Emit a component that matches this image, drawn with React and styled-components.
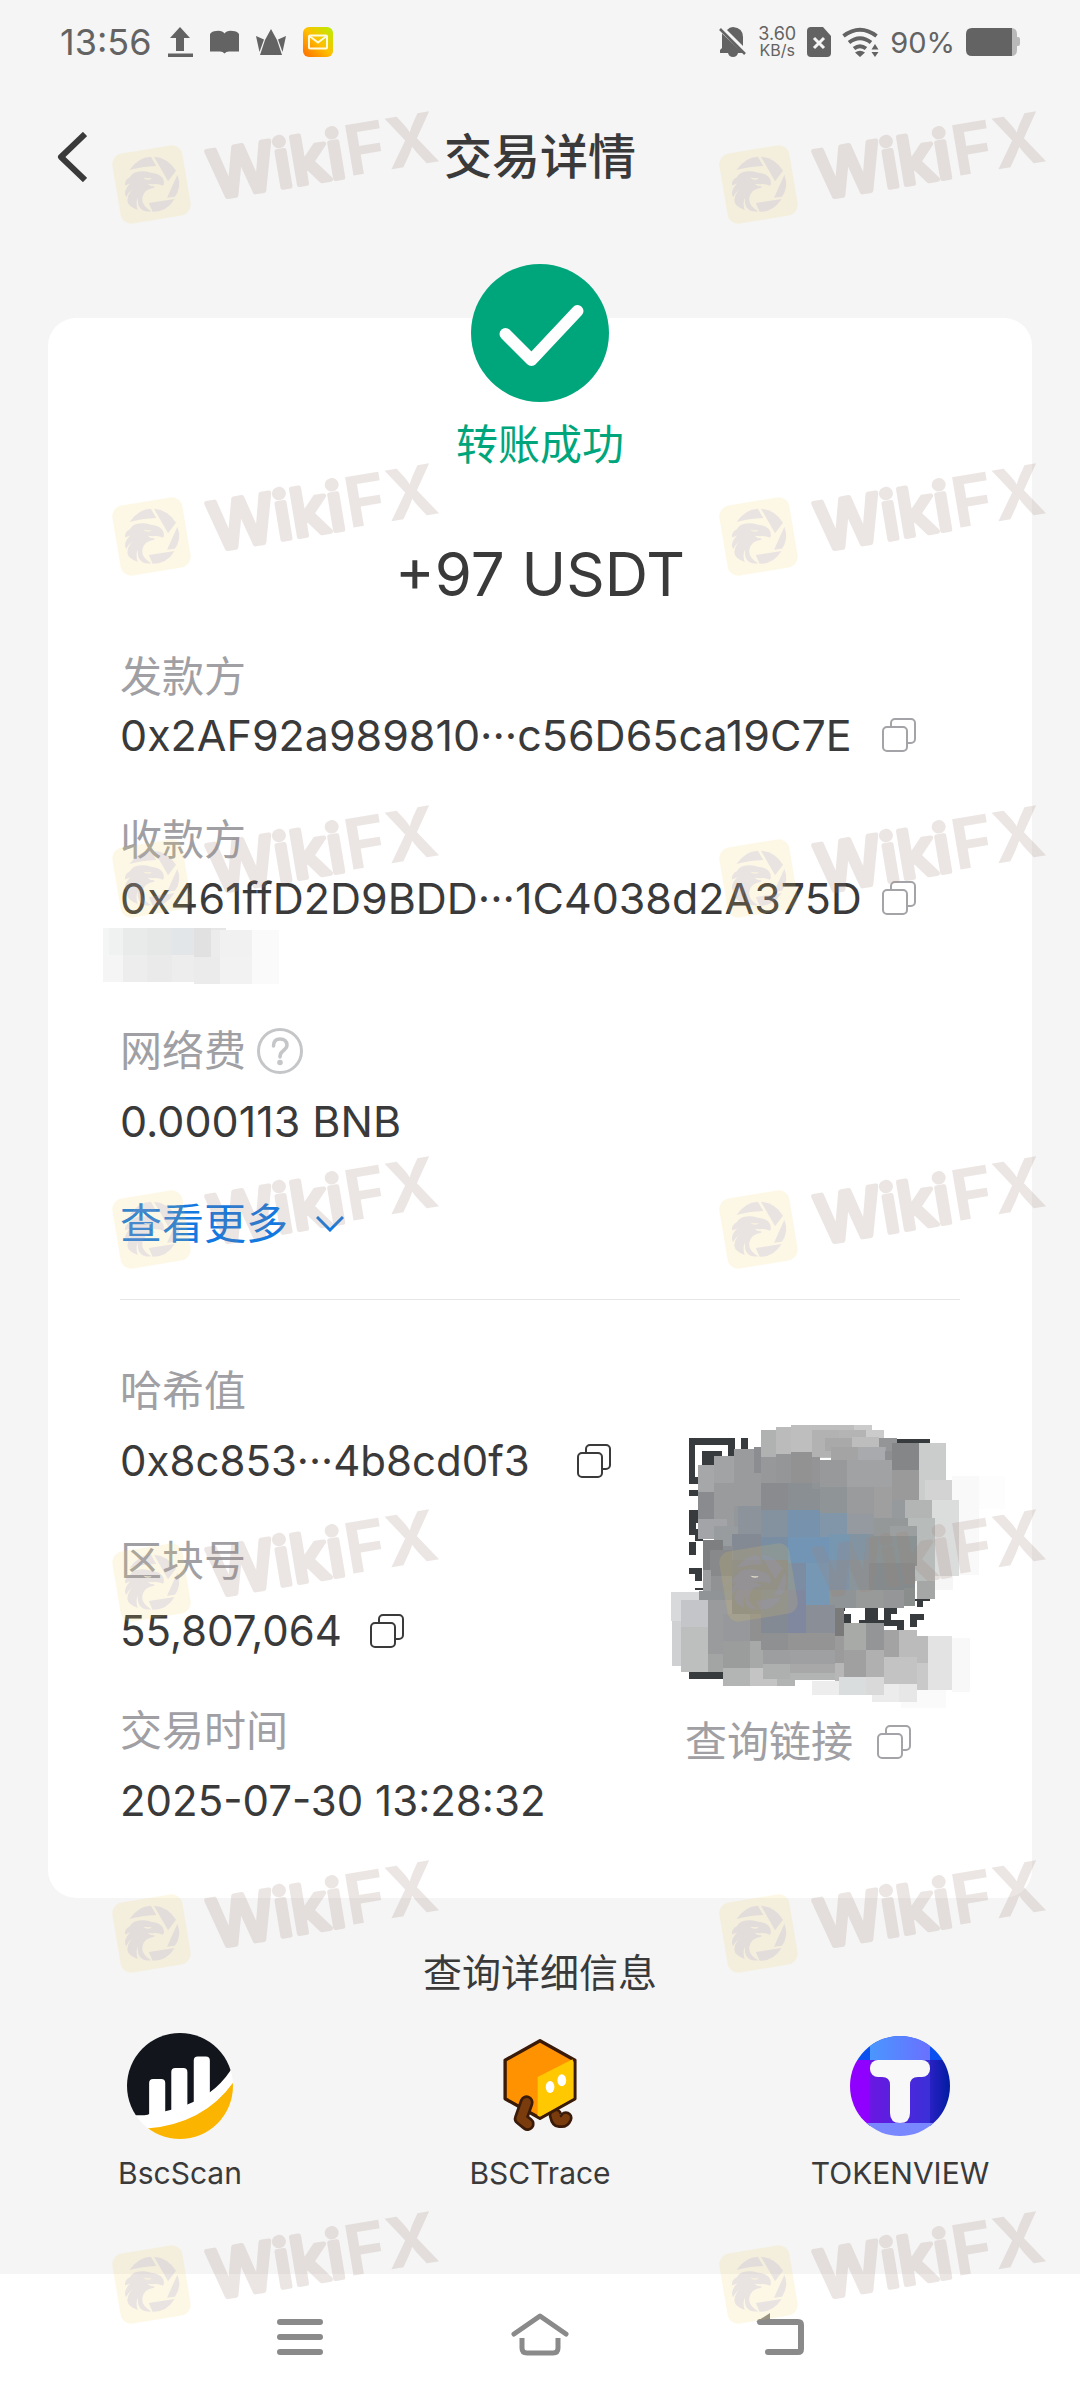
import React from "react";
import styled, { createGlobalStyle } from "styled-components";

const GlobalStyle = createGlobalStyle`
  * {
    box-sizing: border-box;
  }
  body {
    margin: 0;
    background: #f5f5f5;
    color: #3a3a3b;
    font-family: Inter, "Noto Sans CJK SC", sans-serif;
  }
  button {
    padding: 0;
    border: none;
    background: none;
    color: inherit;
    font: inherit;
    cursor: pointer;
  }
  svg {
    display: block;
    flex: none;
  }
  h1, h2, p, dl, dt, dd {
    margin: 0;
    font-weight: 400;
  }
`;

const Page = styled.div`
  position: relative;
  display: flex;
  flex-direction: column;
  min-height: 100vh;
  overflow: hidden;
`;

const StatusBar = styled.div`
  display: flex;
  justify-content: space-between;
  height: 84px;
  padding: 0 60px;
  color: #636363;
`;

const StatusGroup = styled.div`
  display: flex;
  align-items: center;
  gap: ${({ $gap }) => $gap}px;
`;

const Clock = styled.span`
  font-size: 36px;
`;

const Speed = styled.span`
  display: flex;
  flex-direction: column;
  align-items: center;
  font-size: 18px;
  line-height: 16px;
`;

const SpeedUnit = styled.span`
  font-size: 16px;
`;

const Percent = styled.span`
  font-size: 29px;
`;

const Header = styled.header`
  display: grid;
  grid-template-columns: 1fr auto 1fr;
  align-items: center;
  height: 146px;
  padding: 0 57px;
`;

const BackButton = styled.button`
  justify-self: start;
`;

const Title = styled.h1`
  font-size: 48px;
  font-weight: 500;
  line-height: 60px;
`;

const Card = styled.main`
  margin: 88px 48px 0;
  padding: 0 72px 68px;
  border-radius: 28px;
  background: #fff;
`;

const Summary = styled.section`
  display: flex;
  flex-direction: column;
  align-items: center;
  margin-top: -54px;
`;

const Result = styled.p`
  margin-top: 13px;
  color: #00a67b;
  font-size: 42px;
  line-height: 60px;
`;

const Amount = styled.p`
  margin: 59px 0 34px;
  font-size: 60px;
  line-height: 80px;
`;

const Fields = styled.dl`
  display: flex;
  flex-direction: column;
  gap: ${({ $gap }) => $gap}px;
`;

const Field = styled.div`
  display: flex;
  flex-direction: column;
  gap: ${({ $gap }) => $gap || 0}px;
`;

const Label = styled.dt`
  display: flex;
  align-items: center;
  gap: 11px;
  color: #a0a0a4;
  font-size: 42px;
  line-height: 58px;
`;

const Value = styled.dd`
  display: flex;
  align-items: center;
  justify-content: ${({ $spread }) => ($spread ? "space-between" : "start")};
  gap: ${({ $spread }) => ($spread ? 16 : 28)}px;
  padding-right: ${({ $inset }) => $inset || 0}px;
  font-size: ${({ $small }) => ($small ? 42 : 43)}px;
  line-height: 58px;
  white-space: nowrap;
`;

const IconButton = styled.button`
  color: ${({ $muted }) => ($muted ? "#a4a4a8" : "#3a3a3b")};
`;

const Masked = styled.div`
  height: 94px;
  margin-top: 1px;
  margin-left: -17px;
`;

const MoreButton = styled.button`
  display: flex;
  align-items: center;
  gap: 28px;
  margin: 45px 0 46px;
  color: #1378e0;
  font-size: 42px;
  line-height: 58px;
`;

const Chain = styled.section`
  display: grid;
  grid-template-columns: 1fr 275px;
  gap: 74px;
  padding-top: 62px;
  border-top: 1px solid #e6e6e6;
`;

const QrColumn = styled.div`
  padding-top: 76px;
`;

const QrImage = styled.svg`
  margin-left: 4px;
  overflow: visible;
`;

const LinkRow = styled.div`
  display: flex;
  align-items: center;
  gap: 24px;
  margin-top: 34px;
  color: #a0a0a4;
  font-size: 42px;
  line-height: 58px;
`;

const Explorers = styled.section`
  padding-top: 50px;
`;

const ExplorersTitle = styled.h2`
  font-size: 39px;
  line-height: 50px;
  text-align: center;
`;

const ExplorerList = styled.nav`
  display: grid;
  grid-template-columns: repeat(3, 1fr);
  margin-top: 35px;
`;

const Explorer = styled.a`
  display: flex;
  flex-direction: column;
  align-items: center;
  gap: 14px;
  color: inherit;
  font-size: 30px;
  line-height: 40px;
  text-decoration: none;
`;

const SystemNav = styled.nav`
  display: flex;
  align-items: center;
  justify-content: center;
  gap: 180px;
  height: 126px;
  margin-top: auto;
  padding-bottom: 6px;
  background: #fff;
  color: #8a8a8a;
`;

const Overlay = styled.div`
  position: absolute;
  inset: 0;
  pointer-events: none;
`;

const Mark = styled.svg`
  position: absolute;
  top: ${({ $top }) => $top}px;
  left: ${({ $left }) => $left}px;
  overflow: visible;
`;

const CopyIcon = () => (
  <svg width="34" height="34" fill="none" stroke="currentColor" strokeWidth="2">
    <rect x="1" y="9" width="24" height="24" rx="4" />
    <path d="M9 9V5a4 4 0 0 1 4-4h16a4 4 0 0 1 4 4v16a4 4 0 0 1-4 4h-4" />
  </svg>
);

const CopyButton = ({ label, muted }) => (
  <IconButton type="button" aria-label={label} $muted={muted}>
    <CopyIcon />
  </IconButton>
);

const UploadIcon = () => (
  <svg width="25" height="30" fill="currentColor">
    <path d="M12 0 22 11h-6v13H8V11H2zM0 26.500h25V30H0z" />
  </svg>
);

const BookIcon = () => (
  <svg width="29" height="24" fill="currentColor">
    <path d="M0 4Q2 1 6 1q6-1 8.500 2.500Q17 0 23 1q4 0 6 3v17.500H19q-3 0-4.500 2-1.500-2-4.500-2H0z" />
  </svg>
);

const CrownIcon = () => (
  <svg width="30" height="26" fill="currentColor">
    <path d="M15 0 21 11 26 26H4L9 11zM0 7l8 3.500L3.500 23zM30 7l-8 3.500L26.500 23z" />
  </svg>
);

const MailIcon = () => (
  <svg width="30" height="30">
    <defs>
      <linearGradient id="mail" x1="0" y1="1" x2="1" y2="0">
        <stop offset="0" stopColor="#ff6a00" />
        <stop offset=".5" stopColor="#ffbf00" />
        <stop offset="1" stopColor="#b6f000" />
      </linearGradient>
    </defs>
    <rect width="30" height="30" rx="6" fill="url(#mail)" />
    <g fill="none" stroke="#fffbe0" strokeWidth="2">
      <rect x="6" y="8.500" width="18" height="13" rx="1" />
      <path d="m7 9.500 8 6 8-6" />
    </g>
  </svg>
);

const MuteIcon = () => (
  <svg width="28" height="30" fill="currentColor">
    <path d="M3 6.500 24 26h-5q-1 4-5 4t-5-4H1v-3l2-2zM8 3q2.500-3 6-3 10 1 10 10v9z" />
    <path d="m1 2 25 25" stroke="currentColor" strokeWidth="2.500" />
  </svg>
);

const SimIcon = () => (
  <svg width="24" height="30">
    <path d="M4 0h12l8 9v17q0 4-4 4H4q-4 0-4-4V4q0-4 4-4z" fill="currentColor" />
    <path d="m7 11 10 10m0-10L7 21" stroke="#f5f5f5" strokeWidth="3" />
  </svg>
);

const WifiIcon = () => (
  <svg width="37" height="30" fill="none" stroke="currentColor" strokeWidth="4">
    <path d="M1.500 9q16.500-12.500 33 0M7 15.500q11-8.500 22 0M12 21.500q6-4.500 12 0" />
    <path d="M18 30l-5-4.500q5-3.500 10 0zM29.500 22.500h7L33 17zM29.500 25h7L33 30z" fill="currentColor" stroke="none" />
  </svg>
);

const BatteryIcon = () => (
  <svg width="54" height="28">
    <path d="M45 0q6 0 6 6v3h1q2 0 2 2v5q0 2-2 2h-1v4q0 6-6 6z" fill="#b9b9b9" />
    <path d="M6 0h40v28H6q-6 0-6-6V6q0-6 6-6z" fill="currentColor" />
  </svg>
);

const ChevronLeft = () => (
  <svg width="30" height="50" fill="none" stroke="#3a3a3b" strokeWidth="6">
    <path d="m28 2-24 23 24 23" strokeLinejoin="round" />
  </svg>
);

const SuccessIcon = () => (
  <svg width="138" height="138">
    <circle cx="69" cy="69" r="69" fill="#00a67b" />
    <path
      d="m34.500 70 26 26 46-49"
      fill="none"
      stroke="#fff"
      strokeWidth="12"
      strokeLinecap="round"
      strokeLinejoin="round"
    />
  </svg>
);

const HelpIcon = () => (
  <svg width="46" height="46" fill="none" stroke="#c4c6c8" strokeWidth="3">
    <circle cx="23" cy="23" r="21.500" />
    <path d="M16.500 18q0-7 6.500-7t7 6q0 3-4 6-3 2-3 6" strokeWidth="3.500" strokeLinecap="round" />
    <circle cx="23" cy="34.500" r="2.800" fill="#c4c6c8" stroke="none" />
  </svg>
);

const ChevronDown = () => (
  <svg width="28" height="16" fill="none" stroke="currentColor" strokeWidth="3">
    <path d="m1 1 13 13L27 1" />
  </svg>
);

const BscScanLogo = () => (
  <svg width="106" height="106" viewBox="141 101 316 316">
    <clipPath id="bsc">
      <circle cx="299" cy="259" r="158" />
    </clipPath>
    <g clipPath="url(#bsc)">
      <path d="M141 101h316v316H141z" fill="#fff" />
      <path
        d="M141 101h316v100l-9 14q-24 36-60 63l-48 28-19 8-48 16-18 4-45 7q-8 7-24 5h-45z"
        fill="#12161c"
      />
      <path d="M207 360V250q0-12 12-12h24q12 0 12 12v110zM273 350V217q0-12 12-12h24q12 0 12 12v123zM340 330V183q0-12 12-12h24q12 0 12 12v127z" fill="#fff" />
      <path d="M200 386q170-15 257-137v168H200z" fill="#fbb500" />
    </g>
  </svg>
);

const BscTraceLogo = () => (
  <svg width="106" height="106" viewBox="1220 101 316 316" strokeLinejoin="round" strokeLinecap="round">
    <path d="M1424 346q4 20 14 18 12 2 17-10" fill="none" stroke="#3a1a08" strokeWidth="40" />
    <path d="M1424 346q4 20 14 18 12 2 17-10" fill="none" stroke="#7a3c0c" strokeWidth="24" />
    <path d="m1378 124 104 58v115l-104 58-104-58V182z" fill="#ff9200" stroke="#3a1a08" strokeWidth="10" />
    <path d="m1371 232 104-53 3 10v106l-100 56-7-3z" fill="#ffc800" />
    <ellipse cx="1408" cy="262" rx="13" ry="18" fill="#fff" />
    <ellipse cx="1443" cy="242" rx="13" ry="18" fill="#fff" />
    <path d="m1338 308-17 48 20 16" fill="none" stroke="#3a1a08" strokeWidth="42" />
    <path d="m1338 308-17 48 20 16" fill="none" stroke="#7a3c0c" strokeWidth="26" />
  </svg>
);

const TokenViewLogo = () => (
  <svg width="106" height="106" viewBox="-3 -3 106 106">
    <defs>
      <linearGradient id="tvTop">
        <stop offset="0" stopColor="#4a96ff" />
        <stop offset="1" stopColor="#6a70ff" />
      </linearGradient>
      <linearGradient id="tvMid">
        <stop offset="0" stopColor="#6a18e2" />
        <stop offset="1" stopColor="#3a30d8" />
      </linearGradient>
      <linearGradient id="tvRight">
        <stop offset="0" stopColor="#2a20c4" />
        <stop offset="1" stopColor="#001ca0" />
      </linearGradient>
      <clipPath id="tv">
        <circle cx="50" cy="50" r="50" />
      </clipPath>
    </defs>
    <g clipPath="url(#tv)">
      <path d="M0 0h100v24H0z" fill="#0a50f0" />
      <path d="M0 24h20v76H0z" fill="#9000ff" />
      <path d="M20 0h60v30H20z" fill="url(#tvTop)" />
      <path d="M20 24h60v63H20z" fill="url(#tvMid)" />
      <path d="M80 24h20v76H80z" fill="url(#tvRight)" />
      <path d="M0 87h100v13H0z" fill="#7a88ff" />
      <rect x="20" y="24" width="60" height="17" rx="8" fill="#f8f8f8" />
      <path d="M32 41q8 0 8 8v28q0 10 10 10t10-10V49q0-8 8-8z" fill="#f8f8f8" />
    </g>
  </svg>
);

// [x, y, width, height, fill]
const Blocks = ({ items }) =>
  items.map(([x, y, width, height, fill], index) => (
    <rect key={index} x={x} y={y} width={width} height={height} fill={fill} />
  ));

const nameBlocks = [
  [69, 864, 18, 81, "#f4f5f5"], [87, 864, 42, 81, "#f0f1f1"], [129, 864, 72, 81, "#e9eaea"],
  [201, 864, 75, 81, "#e6e7e7"], [276, 864, 66, 81, "#e3e6e8"], [342, 864, 51, 87, "#e1e1e1"],
  [393, 864, 45, 6, "#e6e6e6"], [393, 870, 27, 81, "#ececec"], [420, 870, 97, 81, "#f1f1f1"],
  [516, 870, 81, 162, "#fafafa"], [69, 945, 60, 81, "#f5f5f5"], [129, 945, 72, 81, "#ededed"],
  [201, 945, 75, 81, "#eaeaea"], [276, 945, 66, 81, "#ededed"], [342, 951, 78, 81, "#ebebeb"],
  [420, 951, 96, 81, "#f2f2f2"],
];

const ink = "#383b3d";

const qrBlocks = [
  [88, 115, 137, 137, ink], [107, 135, 99, 98, "#fff"], [127, 154, 59, 60, ink],
  [245, 115, 19, 35, ink], [88, 272, 27, 18, ink], [88, 330, 27, 77, ink],
  [108, 370, 7, 18, "#fff"], [107, 404, 22, 21, ink], [88, 427, 20, 38, ink],
  [88, 506, 39, 18, ink], [107, 524, 20, 19, ink], [107, 564, 22, 8, ink],
  [88, 818, 102, 19, ink], [711, 117, 99, 14, ink], [527, 622, 28, 12, ink],
  [553, 642, 22, 27, ink], [615, 622, 39, 42, ink], [597, 662, 135, 18, ink],
  [673, 622, 40, 42, ink], [693, 643, 20, 19, "#fff"], [713, 680, 19, 10, ink],
  [765, 597, 45, 6, ink], [771, 600, 19, 22, ink], [752, 642, 40, 19, ink],
  [752, 661, 20, 20, ink],
];

const mosaicBlocks = [
  [876, 228, 81, 297, "#f9f9f9"], [957, 228, 78, 100, "#fdfdfd"], [825, 528, 54, 42, "#f6f6f6"],
  [303, 91, 45, 85, "#afb2b1"], [348, 81, 45, 90, "#bbb"], [393, 75, 225, 100, "#bebebe"],
  [582, 75, 54, 20, "#cbcbcb"], [618, 90, 54, 25, "#cbcbcb"], [537, 90, 81, 40, "#b4b4b4"],
  [456, 90, 81, 81, "#b2b2b2"], [495, 115, 81, 40, "#a9a9a9"], [576, 113, 82, 30, "#bdbdbd"],
  [222, 180, 528, 400, "#8c9298"],
  [658, 114, 53, 40, "#949596"], [513, 141, 165, 40, "#a4a4a5"], [594, 141, 81, 39, "#a9aaae"],
  [675, 154, 21, 40, "#8e8f90"], [222, 147, 81, 180, "#9a9b9d"], [282, 141, 21, 80, "#8c8d90"],
  [162, 168, 60, 81, "#a2a3a5"], [162, 249, 60, 135, "#999b9d"], [114, 195, 48, 81, "#a6a7a9"],
  [114, 276, 48, 81, "#8a8b8e"], [114, 357, 87, 60, "#a3a4a7"], [303, 171, 45, 80, "#97989a"],
  [348, 162, 45, 88, "#959697"], [393, 156, 63, 95, "#929292"], [456, 171, 24, 80, "#949496"],
  [480, 180, 81, 81, "#98999b"], [561, 180, 135, 81, "#a1a2a4"], [696, 129, 81, 81, "#858688"],
  [696, 210, 81, 90, "#9a9a9a"], [777, 129, 81, 171, "#cbcdcc"], [795, 240, 81, 60, "#d3d3d3"],
  [735, 300, 81, 54, "#b2b5b4"], [816, 300, 81, 228, "#dbdddd"], [303, 249, 81, 81, "#8a8b8f"],
  [384, 249, 96, 81, "#8a8f93"], [456, 249, 24, 20, "#8f9395"], [480, 261, 81, 81, "#8f9496"],
  [561, 261, 81, 81, "#9a9b9d"], [642, 261, 54, 93, "#9f9f9f"], [696, 300, 39, 60, "#979a9c"],
  [162, 380, 87, 70, "#999c9f"], [222, 320, 12, 62, "#95989b"], [234, 320, 69, 90, "#8c939a"],
  [303, 330, 81, 81, "#84919e"], [384, 330, 96, 81, "#7792ac"], [480, 340, 81, 72, "#8196a8"],
  [561, 342, 81, 60, "#9599a0"], [642, 354, 102, 54, "#959899"], [744, 354, 81, 190, "#b7bbba"],
  [690, 380, 81, 30, "#9b9f9f"], [216, 402, 87, 80, "#848a94"], [303, 411, 81, 80, "#7a8ea3"],
  [384, 411, 123, 126, "#7395b5"], [507, 402, 61, 80, "#7796b0"], [568, 402, 60, 80, "#8294a2"],
  [628, 408, 143, 90, "#8a9293"], [129, 422, 60, 90, "#7e7f81"], [189, 438, 30, 100, "#8b8f94"],
  [152, 450, 64, 81, "#88898b"], [129, 510, 24, 66, "#9e9fa1"], [153, 530, 63, 46, "#919294"],
  [216, 482, 168, 90, "#83878f"], [384, 490, 55, 90, "#7c8da3"], [439, 490, 70, 125, "#7698b5"],
  [508, 482, 60, 90, "#7f93a5"], [568, 482, 60, 90, "#89949b"], [628, 490, 137, 80, "#858b8d"],
  [508, 570, 80, 54, "#8f9496"], [588, 570, 81, 54, "#989a9a"], [669, 570, 65, 54, "#949697"],
  [734, 564, 31, 54, "#8a8f8e"], [771, 543, 54, 54, "#a5a6a6"], [33, 576, 84, 87, "#d8d9da"],
  [36, 663, 81, 135, "#cfd0d1"], [117, 575, 100, 70, "#909497"], [63, 600, 81, 81, "#c4c5c8"],
  [63, 681, 81, 135, "#bdbfbf"], [144, 600, 72, 162, "#9a9b9d"], [144, 762, 45, 54, "#a2a5a4"],
  [216, 572, 87, 70, "#87898a"], [189, 642, 81, 81, "#96989b"], [189, 723, 81, 81, "#9b9d9d"],
  [189, 804, 81, 54, "#b3b4b4"], [270, 642, 33, 81, "#909090"], [270, 723, 40, 81, "#a7a9a8"],
  [270, 804, 81, 54, "#c4c4c4"], [351, 835, 54, 23, "#b2b4b3"], [303, 570, 81, 129, "#848a94"],
  [384, 570, 55, 129, "#8088a0"], [439, 615, 86, 84, "#8a8e97"], [303, 699, 81, 51, "#8f9092"],
  [384, 699, 141, 51, "#949495"], [525, 624, 28, 84, "#7a7a7a"], [525, 708, 28, 81, "#9b9b9b"],
  [525, 789, 28, 54, "#b7b7b7"], [309, 750, 81, 42, "#9d9ea0"], [390, 750, 135, 42, "#9fa0a1"],
  [309, 792, 81, 45, "#aeb0af"], [390, 792, 135, 30, "#a8a8a9"], [390, 820, 135, 22, "#b1b4b2"],
  [552, 669, 66, 81, "#a7aaa7"], [618, 669, 54, 81, "#939597"], [552, 750, 66, 81, "#a0a0a0"],
  [618, 750, 54, 81, "#b0b0b0"], [672, 690, 45, 81, "#a3a3a3"], [717, 690, 54, 81, "#bbb"],
  [771, 708, 33, 81, "#bbb"], [672, 771, 99, 81, "#c3c3c3"], [771, 789, 33, 81, "#c9c9c9"],
  [804, 708, 72, 162, "#e3e3e3"], [876, 714, 54, 162, "#f8f8f8"], [456, 843, 81, 42, "#ededed"],
  [537, 831, 81, 54, "#dadddd"], [618, 831, 54, 54, "#d9d9d9"], [636, 885, 81, 21, "#ececec"],
  [672, 852, 45, 54, "#ececec"], [717, 852, 54, 54, "#e7e7e7"], [723, 906, 135, 18, "#fafafa"],
  [771, 870, 87, 54, "#fafafa"],
];

const Watermark = ({ top, left }) => (
  <Mark width="340" height="130" $top={top} $left={left}>
    <rect
      x="11"
      y="44"
      width="71"
      height="71"
      rx="11"
      fill="rgba(240, 205, 85, 0.15)"
      transform="rotate(-9.500 46.500 79.500)"
    />
    <g transform="translate(-105 -105) scale(.3444 .3333)" fill="rgba(155, 148, 210, 0.2)">
      <path d="M376 510q24-38 62-40l16 28q-42 1-78 12z" />
      <path d="M447 470q42 4 64 42l-23 32z" />
      <path d="M515 524q14 36-7 66l-23 3z" />
      <path d="M432 609l75-12q-24 40-64 38z" />
      <path d="M363 556q-2-16 14-24 8-18 34-18 14-2 28 4 38 4 37 34l-3 5q-14-7-30-4l-15-2q8 8 20 8v4q-32 4-35 32-2 22 26 39-24 4-34-12-6-10-5-30-7 18 0 38-28-10-30-26-2-18 16-38-14 12-20 26-10-18 12-42-12 6-15 6z" />
      <path d="M416 533q8 9 22 5l2-3q-10 0-24-2z" fill="rgba(255, 248, 220, 0.7)" />
    </g>
    <g
      transform="translate(108 94) rotate(-9.500)"
      fill="#a08278"
      stroke="#a08278"
      strokeWidth="5"
      strokeLinejoin="round"
      opacity=".2"
      fontFamily="Inter, sans-serif"
      fontSize="66"
    >
      <text fontWeight="500">Wiki</text>
      <text x="138" fontSize="70" fontWeight="700" strokeWidth="0">
        FX
      </text>
    </g>
  </Mark>
);

const markRows = [105, 457, 799, 1150, 1503, 1854, 2205];
const markColumns = [105, 712];

export default () => (
  <Page>
    <GlobalStyle />
    <StatusBar>
      <StatusGroup $gap={17}>
        <Clock>13:56</Clock>
        <UploadIcon />
        <BookIcon />
        <CrownIcon />
        <MailIcon />
      </StatusGroup>
      <StatusGroup $gap={11}>
        <MuteIcon />
        <Speed>
          3.60
          <SpeedUnit>KB/s</SpeedUnit>
        </Speed>
        <SimIcon />
        <WifiIcon />
        <Percent>90%</Percent>
        <BatteryIcon />
      </StatusGroup>
    </StatusBar>

    <Header>
      <BackButton type="button" aria-label="返回">
        <ChevronLeft />
      </BackButton>
      <Title>交易详情</Title>
    </Header>

    <Card>
      <Summary>
        <SuccessIcon />
        <Result>转账成功</Result>
        <Amount>+97 USDT</Amount>
      </Summary>

      <Fields $gap={47}>
        <Field>
          <Label>发款方</Label>
          <Value $spread $inset={44}>
            0x2AF92a989810···c56D65ca19C7E
            <CopyButton label="复制发款方" muted />
          </Value>
        </Field>
        <Field>
          <Label>收款方</Label>
          <Value $spread $inset={44}>
            0x461ffD2D9BDD···1C4038d2A375D
            <CopyButton label="复制收款方" muted />
          </Value>
        </Field>
      </Fields>
      <Masked>
        <svg width="176" height="56" viewBox="69 864 528 168" shapeRendering="crispEdges">
          <Blocks items={nameBlocks} />
        </svg>
      </Masked>
      <Fields>
        <Field $gap={12}>
          <Label>
            网络费
            <IconButton type="button" aria-label="网络费说明">
              <HelpIcon />
            </IconButton>
          </Label>
          <Value>0.000113 BNB</Value>
        </Field>
      </Fields>
      <MoreButton type="button">
        查看更多
        <ChevronDown />
      </MoreButton>

      <Chain>
        <Fields $gap={42}>
          <Field $gap={12}>
            <Label>哈希值</Label>
            <Value $small $spread>
              0x8c853···4b8cd0f3
              <CopyButton label="复制哈希值" />
            </Value>
          </Field>
          <Field $gap={12}>
            <Label>区块号</Label>
            <Value $small>
              55,807,064
              <CopyButton label="复制区块号" />
            </Value>
          </Field>
          <Field $gap={12}>
            <Label>交易时间</Label>
            <Value $small>2025-07-30 13:28:32</Value>
          </Field>
        </Fields>
        <QrColumn>
          <QrImage
            width="241"
            height="241"
            viewBox="88 115 723 723"
            shapeRendering="crispEdges"
            role="img"
            aria-label="二维码"
          >
            <Blocks items={qrBlocks} />
            <Blocks items={mosaicBlocks} />
          </QrImage>
          <LinkRow>
            查询链接
            <CopyButton label="复制查询链接" muted />
          </LinkRow>
        </QrColumn>
      </Chain>
    </Card>

    <Explorers>
      <ExplorersTitle>查询详细信息</ExplorersTitle>
      <ExplorerList>
        <Explorer href="#bscscan">
          <BscScanLogo />
          BscScan
        </Explorer>
        <Explorer href="#bsctrace">
          <BscTraceLogo />
          BSCTrace
        </Explorer>
        <Explorer href="#tokenview">
          <TokenViewLogo />
          TOKENVIEW
        </Explorer>
      </ExplorerList>
    </Explorers>

    <SystemNav>
      <button type="button" aria-label="菜单">
        <svg width="60" height="44" stroke="currentColor" strokeWidth="6" strokeLinecap="round">
          <path d="M10 10h40M10 25h40M10 40h40" />
        </svg>
      </button>
      <button type="button" aria-label="主页">
        <svg width="60" height="44" fill="none" stroke="currentColor" strokeWidth="5" strokeLinejoin="round">
          <path d="M4 22 30 4l26 18" strokeLinecap="round" />
          <path d="M12 26v10q0 5 5 5h26q5 0 5-5V26" />
        </svg>
      </button>
      <button type="button" aria-label="返回上一页">
        <svg width="60" height="44" fill="none" stroke="currentColor" strokeWidth="6" strokeLinejoin="round">
          <path d="M10 10h38q3 0 3 3v24q0 3-3 3H18" strokeLinecap="round" />
          <path d="m6 10 14-9v9z" fill="currentColor" stroke="none" />
        </svg>
      </button>
    </SystemNav>

    <Overlay aria-hidden="true">
      {markRows.map((top) =>
        markColumns.map((left) => (
          <Watermark key={`${top}-${left}`} top={top} left={left} />
        ))
      )}
    </Overlay>
  </Page>
);
